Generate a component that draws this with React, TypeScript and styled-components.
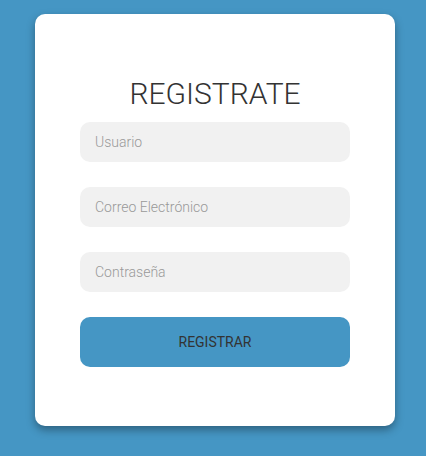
import React from "react";
import styled, { createGlobalStyle } from "styled-components";

const Global = createGlobalStyle`
  html, body { margin: 0; padding: 0; }
  body {
    background: #4596c4;
    font-family: Roboto, "Noto Sans", sans-serif;
    height: 456px;
    overflow: hidden;
  }
`;

const Page = styled.div`
  padding: 14px 0 0 35px;
`;

const Card = styled.form`
  box-sizing: border-box;
  width: 360px;
  height: 412px;
  background: #fff;
  border-radius: 10px;
  box-shadow: 0 4px 8px rgba(0, 0, 0, 0.35);
  padding: 62px 45px 0;
  display: flex;
  flex-direction: column;
`;

const Title = styled.h1`
  margin: 0 0 10px;
  font-weight: 300;
  font-size: 30px;
  line-height: 36px;
  color: #333;
  text-align: center;
`;

const Field = styled.input`
  box-sizing: border-box;
  width: 270px;
  height: 40px;
  border: none;
  outline: none;
  border-radius: 10px;
  background: #f1f1f1;
  padding: 0 15px;
  margin-bottom: 25px;
  font-family: Roboto, sans-serif;
  font-weight: 300;
  font-size: 14px;
  color: #333;
  &::placeholder {
    color: #999;
  }
`;

const Button = styled.button`
  width: 270px;
  height: 50px;
  border: none;
  border-radius: 10px;
  background: #4596c4;
  font-family: Roboto, sans-serif;
  font-weight: 400;
  font-size: 14px;
  color: #333;
  text-transform: uppercase;
  cursor: pointer;
`;

export default function App() {
  return (
    <>
      <Global />
      <Page>
        <Card onSubmit={(e) => e.preventDefault()}>
          <Title>REGISTRATE</Title>
          <Field type="text" placeholder="Usuario" />
          <Field type="email" placeholder="Correo Electrónico" />
          <Field type="password" placeholder="Contraseña" />
          <Button type="submit">Registrar</Button>
        </Card>
      </Page>
    </>
  );
}
